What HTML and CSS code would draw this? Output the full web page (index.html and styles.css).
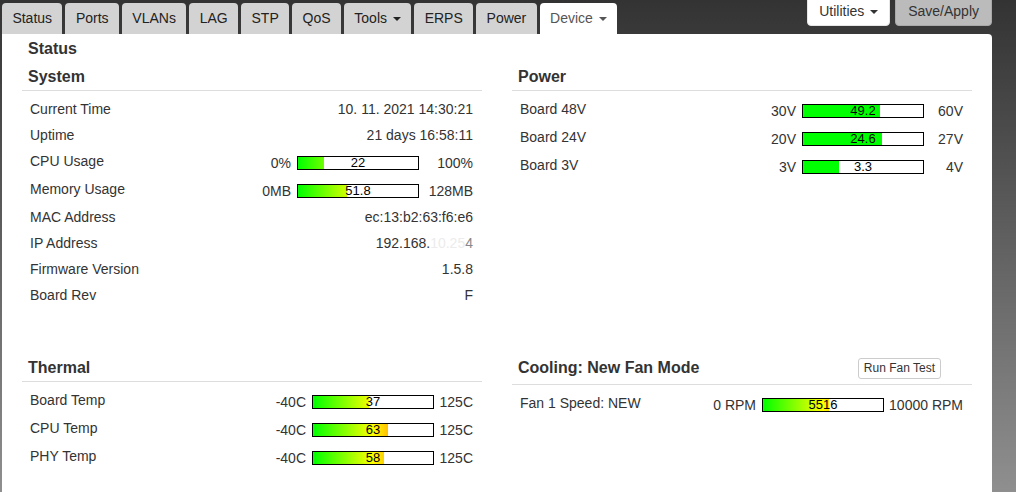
FILE: index.html
```html
<!DOCTYPE html>
<html>
<head>
<meta charset="utf-8">
<title>Status</title>
<link rel="stylesheet" href="styles.css">
</head>
<body>
<div class="topbar">
  <nav class="tabs">
    <span class="tab">Status</span>
    <span class="tab">Ports</span>
    <span class="tab">VLANs</span>
    <span class="tab">LAG</span>
    <span class="tab">STP</span>
    <span class="tab">QoS</span>
    <span class="tab">Tools <span class="caret"></span></span>
    <span class="tab">ERPS</span>
    <span class="tab">Power</span>
    <span class="tab active">Device <span class="caret"></span></span>
  </nav>
  <div class="actions">
    <button class="btn btn-white">Utilities <span class="caret"></span></button>
    <button class="btn btn-gray">Save/Apply</button>
  </div>
</div>

<main class="panel">
  <h1 class="page-title">Status</h1>
  <div class="grid">
    <section class="section">
      <h2 class="section-head">System</h2>
      <div class="rows">
        <div class="row"><span>Current Time</span><span class="val">10. 11. 2021 14:30:21</span></div>
        <div class="row"><span>Uptime</span><span class="val">21 days 16:58:11</span></div>
        <div class="row"><span>CPU Usage</span>
          <div class="meter"><span class="min">0%</span><div class="bar"><div class="fill grad" style="width:22%"></div><span class="bar-label">22</span></div><span class="max max-sys">100%</span></div></div>
        <div class="row"><span>Memory Usage</span>
          <div class="meter"><span class="min">0MB</span><div class="bar"><div class="fill grad" style="width:40.47%"></div><span class="bar-label">51.8</span></div><span class="max max-sys">128MB</span></div></div>
        <div class="row"><span>MAC Address</span><span class="val">ec:13:b2:63:f6:e6</span></div>
        <div class="row"><span>IP Address</span><span class="val">192.168.<span class="redact">10.25</span><span class="redact-end">4</span></span></div>
        <div class="row"><span>Firmware Version</span><span class="val">1.5.8</span></div>
        <div class="row"><span>Board Rev</span><span class="val">F</span></div>
      </div>
    </section>

    <section class="section">
      <h2 class="section-head">Power</h2>
      <div class="rows">
        <div class="row"><span>Board 48V</span>
          <div class="meter"><span class="min">30V</span><div class="bar"><div class="fill solid" style="width:64%"></div><span class="bar-label">49.2</span></div><span class="max max-39">60V</span></div></div>
        <div class="row"><span>Board 24V</span>
          <div class="meter"><span class="min">20V</span><div class="bar"><div class="fill solid" style="width:65.7%"></div><span class="bar-label">24.6</span></div><span class="max max-39">27V</span></div></div>
        <div class="row"><span>Board 3V</span>
          <div class="meter"><span class="min">3V</span><div class="bar"><div class="fill solid" style="width:30%"></div><span class="bar-label">3.3</span></div><span class="max max-39">4V</span></div></div>
      </div>
    </section>

    <section class="section">
      <h2 class="section-head">Thermal</h2>
      <div class="rows">
        <div class="row"><span>Board Temp</span>
          <div class="meter"><span class="min">-40C</span><div class="bar"><div class="fill grad" style="width:46.67%"></div><span class="bar-label">37</span></div><span class="max max-39">125C</span></div></div>
        <div class="row"><span>CPU Temp</span>
          <div class="meter"><span class="min">-40C</span><div class="bar"><div class="fill grad" style="width:62.42%"></div><span class="bar-label">63</span></div><span class="max max-39">125C</span></div></div>
        <div class="row"><span>PHY Temp</span>
          <div class="meter"><span class="min">-40C</span><div class="bar"><div class="fill grad" style="width:59.39%"></div><span class="bar-label">58</span></div><span class="max max-39">125C</span></div></div>
      </div>
    </section>

    <section class="section">
      <h2 class="section-head head-flex"><span>Cooling: New Fan Mode</span><button class="btn-small">Run Fan Test</button></h2>
      <div class="rows">
        <div class="row"><span>Fan 1 Speed: NEW</span>
          <div class="meter"><span class="min">0 RPM</span><div class="bar"><div class="fill grad" style="width:55.16%"></div><span class="bar-label">5516</span></div><span class="max max-fan">10000 RPM</span></div></div>
      </div>
    </section>
  </div>
</main>
</body>
</html>
```

FILE: styles.css
```css
html, body {
  margin: 0;
  padding: 0;
}

body {
  min-height: 100vh;
  font-family: "Liberation Sans", Arial, sans-serif;
  font-size: 14px;
  color: #333;
  background: linear-gradient(to bottom, #333333 0%, #8f8f8f 100%);
  overflow: hidden;
}

.topbar {
  display: flex;
  justify-content: space-between;
  align-items: flex-start;
  height: 34px;
  padding: 0 24px 0 2px;
}

.tabs {
  display: flex;
  gap: 3px;
  padding-top: 3px;
}

.tab {
  height: 31px;
  line-height: 31px;
  padding: 0 10.4px;
  background: #d3d3d3;
  color: #222;
  border-radius: 4px 4px 0 0;
  white-space: nowrap;
}

.tab.active {
  background: #fff;
  color: #555;
}

.caret {
  display: inline-block;
  width: 0;
  height: 0;
  margin-left: 2px;
  vertical-align: middle;
  border-top: 4px solid currentColor;
  border-left: 4px solid transparent;
  border-right: 4px solid transparent;
}

.actions {
  display: flex;
  gap: 5px;
  margin-top: -4px;
}

.btn {
  height: 30px;
  padding: 0 12px;
  border: 1px solid #ddd;
  border-radius: 4px;
  font-family: "Liberation Sans", Arial, sans-serif;
  font-size: 14px;
  line-height: 28px;
  color: #333;
}

.btn-white {
  padding: 0 11px;
  background: #fff;
  border-color: #e6e6e6;
}

.btn-gray {
  background: #bbbbbb;
  border-color: #a9a9a9;
}

.panel {
  box-sizing: border-box;
  min-height: calc(100vh - 34px);
  margin: 0 24px 0 2px;
  padding: 5px 20px 0 20px;
  background: #fff;
  border-radius: 0 4px 0 0;
}

.page-title {
  margin: 0;
  padding-left: 6px;
  font-size: 16px;
  line-height: 20px;
  font-weight: bold;
  color: #333;
}

.grid {
  display: grid;
  grid-template-columns: 1fr 1fr;
  column-gap: 30px;
  row-gap: 49px;
  margin-top: 7px;
}

.section-head {
  margin: 0;
  padding: 1px 0 3px 6px;
  font-size: 16px;
  line-height: 20px;
  font-weight: bold;
  color: #333;
  border-bottom: 1px solid #dddddd;
}

.head-flex {
  display: flex;
  align-items: flex-start;
}

.btn-small {
  height: 21px;
  margin: 0 31px 2px auto;
  padding: 0 5px;
  border: 1px solid #cccccc;
  border-radius: 3px;
  background: #fff;
  font-family: "Liberation Sans", Arial, sans-serif;
  font-size: 12px;
  line-height: 19px;
  font-weight: normal;
  color: #333;
}

.rows {
  padding-top: 5px;
}

.row {
  display: flex;
  justify-content: space-between;
  align-items: flex-start;
  padding: 3px 9px 3px 8px;
  line-height: 20px;
}

.val {
  text-align: right;
  white-space: nowrap;
}

.redact {
  color: #ececec;
}

.redact-end {
  color: #888;
}

.meter {
  box-sizing: border-box;
  display: flex;
  align-items: center;
  height: 22px;
  padding-top: 2px;
}

.min {
  margin-right: 6px;
  white-space: nowrap;
}

.bar {
  position: relative;
  width: 120px;
  height: 12px;
  border: 1px solid #000;
  background: #fff;
}

.fill {
  height: 100%;
}

.fill.grad {
  background-image: linear-gradient(to right, #00ff00 0%, #ffff00 50%, #ff0000 100%);
  background-size: 120px 100%;
  background-repeat: no-repeat;
}

.fill.solid {
  background: #00ff00;
}

.bar-label {
  position: absolute;
  top: 0;
  left: 0;
  right: 0;
  text-align: center;
  font-size: 13px;
  line-height: 12px;
  color: #000;
}

.max {
  text-align: right;
  white-space: nowrap;
}

.max-sys { width: 54px; }
.max-39 { width: 39px; }
.max-fan { width: 79px; }
```
